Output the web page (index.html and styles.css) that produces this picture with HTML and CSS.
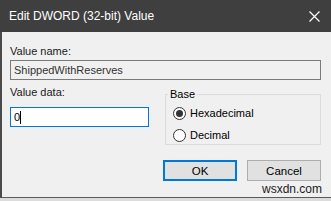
FILE: index.html
```html
<!DOCTYPE html>
<html lang="en">
<head>
    <meta charset="UTF-8">
    <title>Edit DWORD (32-bit) Value</title>
    <link rel="stylesheet" href="styles.css">
</head>
<body>
    <div class="dialog">
        <div class="titlebar">
            <span class="title">Edit DWORD (32-bit) Value</span>
            <svg class="close" width="11" height="11" viewBox="0 0 11 11">
                <path d="M0.5 0.5 L10.5 10.5 M10.5 0.5 L0.5 10.5" stroke="#fff" stroke-width="1.2" fill="none"/>
            </svg>
        </div>

        <div class="content">
            <div class="label name-label">Value name:</div>
            <div class="textbox readonly">ShippedWithReserves</div>

            <div class="middle">
                <div class="data-col">
                    <div class="label data-label">Value data:</div>
                    <div class="textbox focused"><span>0</span><span class="caret"></span></div>
                </div>

                <fieldset class="base">
                    <legend>Base</legend>
                    <div class="radio"><span class="dot checked"></span>Hexadecimal</div>
                    <div class="radio"><span class="dot"></span>Decimal</div>
                </fieldset>
            </div>

            <div class="buttons">
                <button class="btn default">OK</button>
                <button class="btn">Cancel</button>
            </div>
        </div>

        <div class="watermark">wsxdn.com</div>
    </div>
</body>
</html>
```

FILE: styles.css
```css
* {
    margin: 0;
    padding: 0;
    box-sizing: border-box;
}

body {
    width: 331px;
    height: 201px;
    overflow: hidden;
    background: #dcdcdc;
    font-family: 'Liberation Sans', Arial, sans-serif;
    font-size: 11px;
    color: #000;
}

.dialog {
    position: relative;
    width: 331px;
    height: 198px;
    background: #f0f0f0;
    border-left: 2px solid #4a4a4a;
    border-bottom: 1px solid #5a5a5a;
}

.titlebar {
    height: 32px;
    background: #3f3f3f;
    color: #fff;
    display: flex;
    align-items: center;
    justify-content: space-between;
    padding: 0 11px 0 9px;
    margin-left: -2px;
}

.title {
    font-size: 12px;
}

.content {
    padding: 0 10px 0 8px;
}

.label {
    height: 15px;
    line-height: 15px;
    color: #1a1a1a;
}

.name-label {
    margin-top: 12px;
    margin-bottom: 1px;
}

.textbox {
    height: 20px;
    line-height: 18px;
    padding-left: 3px;
    border: 1px solid #7a7a7a;
    background: #f0f0f0;
    color: #333;
}

.textbox.focused {
    border-color: #0078d7;
    background: #fff;
    color: #000;
    width: 139px;
    display: flex;
    align-items: center;
}

.caret {
    display: inline-block;
    width: 1px;
    height: 13px;
    background: #000;
}

.middle {
    display: flex;
    justify-content: space-between;
}

.data-label {
    margin-top: 5px;
    margin-bottom: 7px;
}

.base {
    width: 156px;
    height: 57px;
    margin-top: 8px;
    border: 1px solid #dcdcdc;
    padding: 1px 0 0 7px;
}

.base legend {
    padding: 0 2px;
    margin-left: -5px;
    line-height: 13px;
}

.radio {
    display: flex;
    align-items: center;
    height: 22px;
}

.dot {
    width: 13px;
    height: 13px;
    border: 1px solid #333;
    border-radius: 50%;
    background: #fff;
    margin-right: 4px;
    position: relative;
}

.dot.checked::after {
    content: '';
    position: absolute;
    left: 2px;
    top: 2px;
    width: 7px;
    height: 7px;
    border-radius: 50%;
    background: #333;
}

.buttons {
    display: flex;
    justify-content: flex-end;
    gap: 10px;
    margin-top: 15px;
}

.btn {
    width: 74px;
    height: 21px;
    font-family: inherit;
    font-size: 11.5px;
    background: #e1e1e1;
    border: 1px solid #adadad;
    color: #000;
}

.btn.default {
    border: 2px solid #0078d7;
}

.watermark {
    position: absolute;
    right: 9px;
    bottom: 1px;
    font-size: 12px;
    color: #1a1a1a;
    background: #f0f0f0;
    line-height: 13px;
}
```
